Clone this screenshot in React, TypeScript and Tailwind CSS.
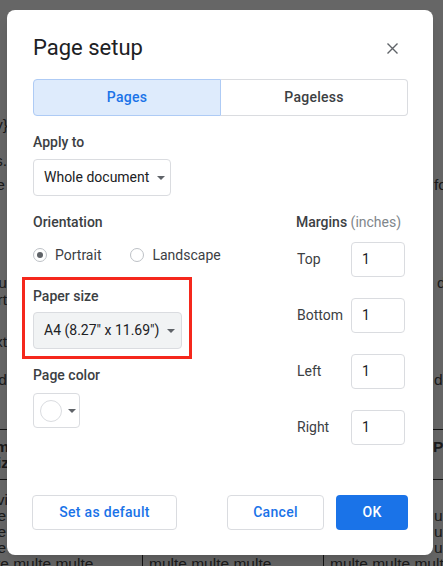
import React from 'react';

const Caret = () => (
  <svg width="8" height="4" viewBox="0 0 8 4" className="shrink-0">
    <path d="M0 0 L8 0 L4 4 Z" fill="#5f6368" />
  </svg>
);

const Radio = ({ checked }: { checked?: boolean }) => (
  <span className="w-[14px] h-[14px] rounded-full border border-[#bdc1c6] flex items-center justify-center shrink-0">
    {checked && <span className="w-[6px] h-[6px] rounded-full bg-[#5f6368]" />}
  </span>
);

const MarginRow = ({ label }: { label: string }) => (
  <div className="flex items-center justify-between h-[35px] pr-[3px]">
    <span className="pl-px text-[14px] text-[#3c4043]">{label}</span>
    <div className="w-[54px] h-[35px] border border-[#dadce0] rounded-[4px] flex items-center pl-[10px] text-[14px] text-[#202124]">
      1
    </div>
  </div>
);

const Backdrop = () => (
  <div className="absolute inset-0 bg-white text-[#444] text-[15.5px] leading-[16px] font-['Liberation_Sans',Arial,sans-serif]">
    <span className="absolute right-[435px] top-[117px] whitespace-nowrap">{'Ally}'}</span>
    <span className="absolute right-[436px] top-[153px] whitespace-nowrap">tools.</span>
    <span className="absolute right-[438px] top-[177px] whitespace-nowrap">the</span>
    <span className="absolute left-[434px] top-[177px] whitespace-nowrap">for</span>
    <span className="absolute right-[436px] top-[275px] whitespace-nowrap">actu</span>
    <span className="absolute left-[437px] top-[275px] whitespace-nowrap">d</span>
    <span className="absolute right-[436px] top-[292px] whitespace-nowrap">sort</span>
    <span className="absolute right-[436px] top-[334px] whitespace-nowrap">text</span>
    <span className="absolute right-[436px] top-[372px] whitespace-nowrap">and</span>
    <span className="absolute left-[434px] top-[372px] whitespace-nowrap">de</span>
    <div className="absolute left-0 right-0 top-[429px] h-px bg-[#333]" />
    <span className="absolute right-[434px] top-[439px] whitespace-nowrap font-bold">Nom</span>
    <span className="absolute right-[434px] top-[455px] whitespace-nowrap font-bold">Taiz</span>
    <span className="absolute left-[433px] top-[439px] whitespace-nowrap font-bold">Pre</span>
    <div className="absolute left-0 right-0 top-[479px] h-px bg-[#333]" />
    <div className="absolute left-[142px] top-[479px] bottom-0 w-px bg-[#333]" />
    <div className="absolute left-[323px] top-[479px] bottom-0 w-px bg-[#333]" />
    <span className="absolute right-[435px] top-[492px] whitespace-nowrap">Devi</span>
    <div className="absolute right-[437px] top-[508px] flex flex-col items-end">
      <span>multe</span>
      <span>multe</span>
      <span>multe</span>
    </div>
    <div className="absolute left-[434px] top-[508px] flex flex-col">
      <span>ulte</span>
      <span>ulte</span>
      <span>ulte</span>
    </div>
    <span className="absolute left-[-29px] top-[556px] whitespace-nowrap">multe multe multe</span>
    <span className="absolute left-[149px] top-[556px] whitespace-nowrap">multe multe multe</span>
    <span className="absolute left-[330px] top-[556px] whitespace-nowrap">multe multe multe</span>
  </div>
);

export default function App() {
  return (
    <div className="relative w-[443px] h-[566px] overflow-hidden font-['Roboto',Arial,sans-serif]">
      <Backdrop />
      <div className="absolute inset-0 bg-black/60 flex items-start justify-start pl-[7px] pt-[10px]">
        <div className="w-[426px] bg-white rounded-[8px] pl-[26px] pr-[25px] pt-[22px] pb-[25px] shadow-lg">
          {/* title */}
          <div className="flex items-center justify-between h-8">
            <h1 className="text-[22px] leading-7 text-[#202124] font-normal">Page setup</h1>
            <button className="w-8 h-8 flex items-center justify-center">
              <svg width="11" height="11" viewBox="0 0 11 11">
                <path d="M0.5 0.5 L10.5 10.5 M10.5 0.5 L0.5 10.5" stroke="#5f6368" strokeWidth="1.4" />
              </svg>
            </button>
          </div>

          {/* tabs */}
          <div className="flex h-[37px] mt-[15px] text-[14px] font-medium tracking-[0.25px]">
            <div className="flex-1 flex items-center justify-center bg-[#deebfc] border border-[#aecbf5] rounded-l-[4px] text-[#1a73e8]">
              Pages
            </div>
            <div className="flex-1 flex items-center justify-center border border-l-0 border-[#dadce0] rounded-r-[4px] text-[#3c4043]">
              Pageless
            </div>
          </div>

          {/* apply to */}
          <div className="mt-4 text-[14px] leading-5 font-medium text-[#3c4043]">Apply to</div>
          <div className="mt-[7px] w-[138px] h-[37px] border border-[#dadce0] rounded-[4px] flex items-center gap-[8px] pl-[10px] text-[14px] text-[#202124]">
            <span>Whole document</span>
            <Caret />
          </div>

          <div className="flex mt-4">
            {/* left column */}
            <div className="w-[263px]">
              <div className="text-[14px] leading-5 font-medium text-[#3c4043]">Orientation</div>
              <div className="mt-[13px] h-5 flex items-center text-[14px] text-[#3c4043]">
                <Radio checked />
                <span className="ml-[8px]">Portrait</span>
                <span className="ml-[29px]"><Radio /></span>
                <span className="ml-[8px]">Landscape</span>
              </div>

              <div className="relative w-fit mt-[21px]">
                <div className="text-[14px] leading-5 font-medium text-[#3c4043]">Paper size</div>
                <div className="mt-[6px] w-[149px] h-[37px] bg-[#f1f3f4] border border-[#dadce0] rounded-[4px] flex items-center gap-[8px] pl-[10px] text-[14px] text-[#202124]">
                  <span>A4 (8.27" x 11.69")</span>
                  <Caret />
                </div>
                <div className="absolute -left-[11px] -top-[9px] -right-[10px] -bottom-[10px] border-[3px] border-[#f5281c]" />
              </div>

              <div className="mt-4 text-[14px] leading-5 font-medium text-[#3c4043]">Page color</div>
              <div className="mt-2 w-[47px] h-[35px] border border-[#dadce0] rounded-[4px] flex items-center pl-[6px] gap-[6px]">
                <span className="w-[22px] h-[22px] rounded-full border border-[#dadce0] bg-white" />
                <Caret />
              </div>
            </div>

            {/* margins */}
            <div className="flex-1">
              <div className="text-[14px] leading-5 text-[#3c4043]">
                <span className="font-medium">Margins</span> <span className="text-[#80868b]">(inches)</span>
              </div>
              <div className="mt-[10px] flex flex-col gap-[21px]">
                <MarginRow label="Top" />
                <MarginRow label="Bottom" />
                <MarginRow label="Left" />
                <MarginRow label="Right" />
              </div>
            </div>
          </div>

          {/* footer */}
          <div className="mt-[50px] flex items-center text-[14px] font-medium tracking-[0.3px]">
            <button className="-ml-px w-[145px] h-[35px] border border-[#dadce0] rounded-[4px] text-[#1a73e8]">
              Set as default
            </button>
            <div className="ml-auto flex gap-3">
              <button className="w-[97px] h-[35px] border border-[#dadce0] rounded-[4px] text-[#1a73e8]">Cancel</button>
              <button className="w-[72px] h-[35px] bg-[#1a73e8] rounded-[4px] text-white">OK</button>
            </div>
          </div>
        </div>
      </div>
    </div>
  );
}
